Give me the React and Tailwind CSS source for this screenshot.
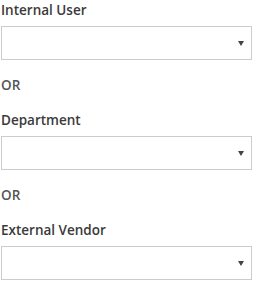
function Select() {
  return (
    <div className="relative h-[34px] w-[251px] border border-[#cccccc] bg-white">
      <svg
        className="absolute right-[7px] top-[14px]"
        width="6"
        height="5"
        viewBox="0 0 6 5"
      >
        <path d="M0 0 L6 0 L3 5 Z" fill="#444444" />
      </svg>
    </div>
  );
}

function Field({ label }) {
  return (
    <div>
      <div className="h-5 text-[13.5px] font-semibold leading-5 text-[#3a3a3a]">{label}</div>
      <div className="mt-[6px]">
        <Select />
      </div>
    </div>
  );
}

function Or() {
  return (
    <div className="my-[15px] h-5 text-[13.5px] font-semibold leading-5 text-[#555555]">OR</div>
  );
}

export default function App() {
  return (
    <div
      className="min-h-[286px] bg-white pl-[1px]"
      style={{ fontFamily: '"Open Sans", sans-serif' }}
    >
      <Field label="Internal User" />
      <Or />
      <Field label="Department" />
      <Or />
      <Field label="External Vendor" />
    </div>
  );
}
